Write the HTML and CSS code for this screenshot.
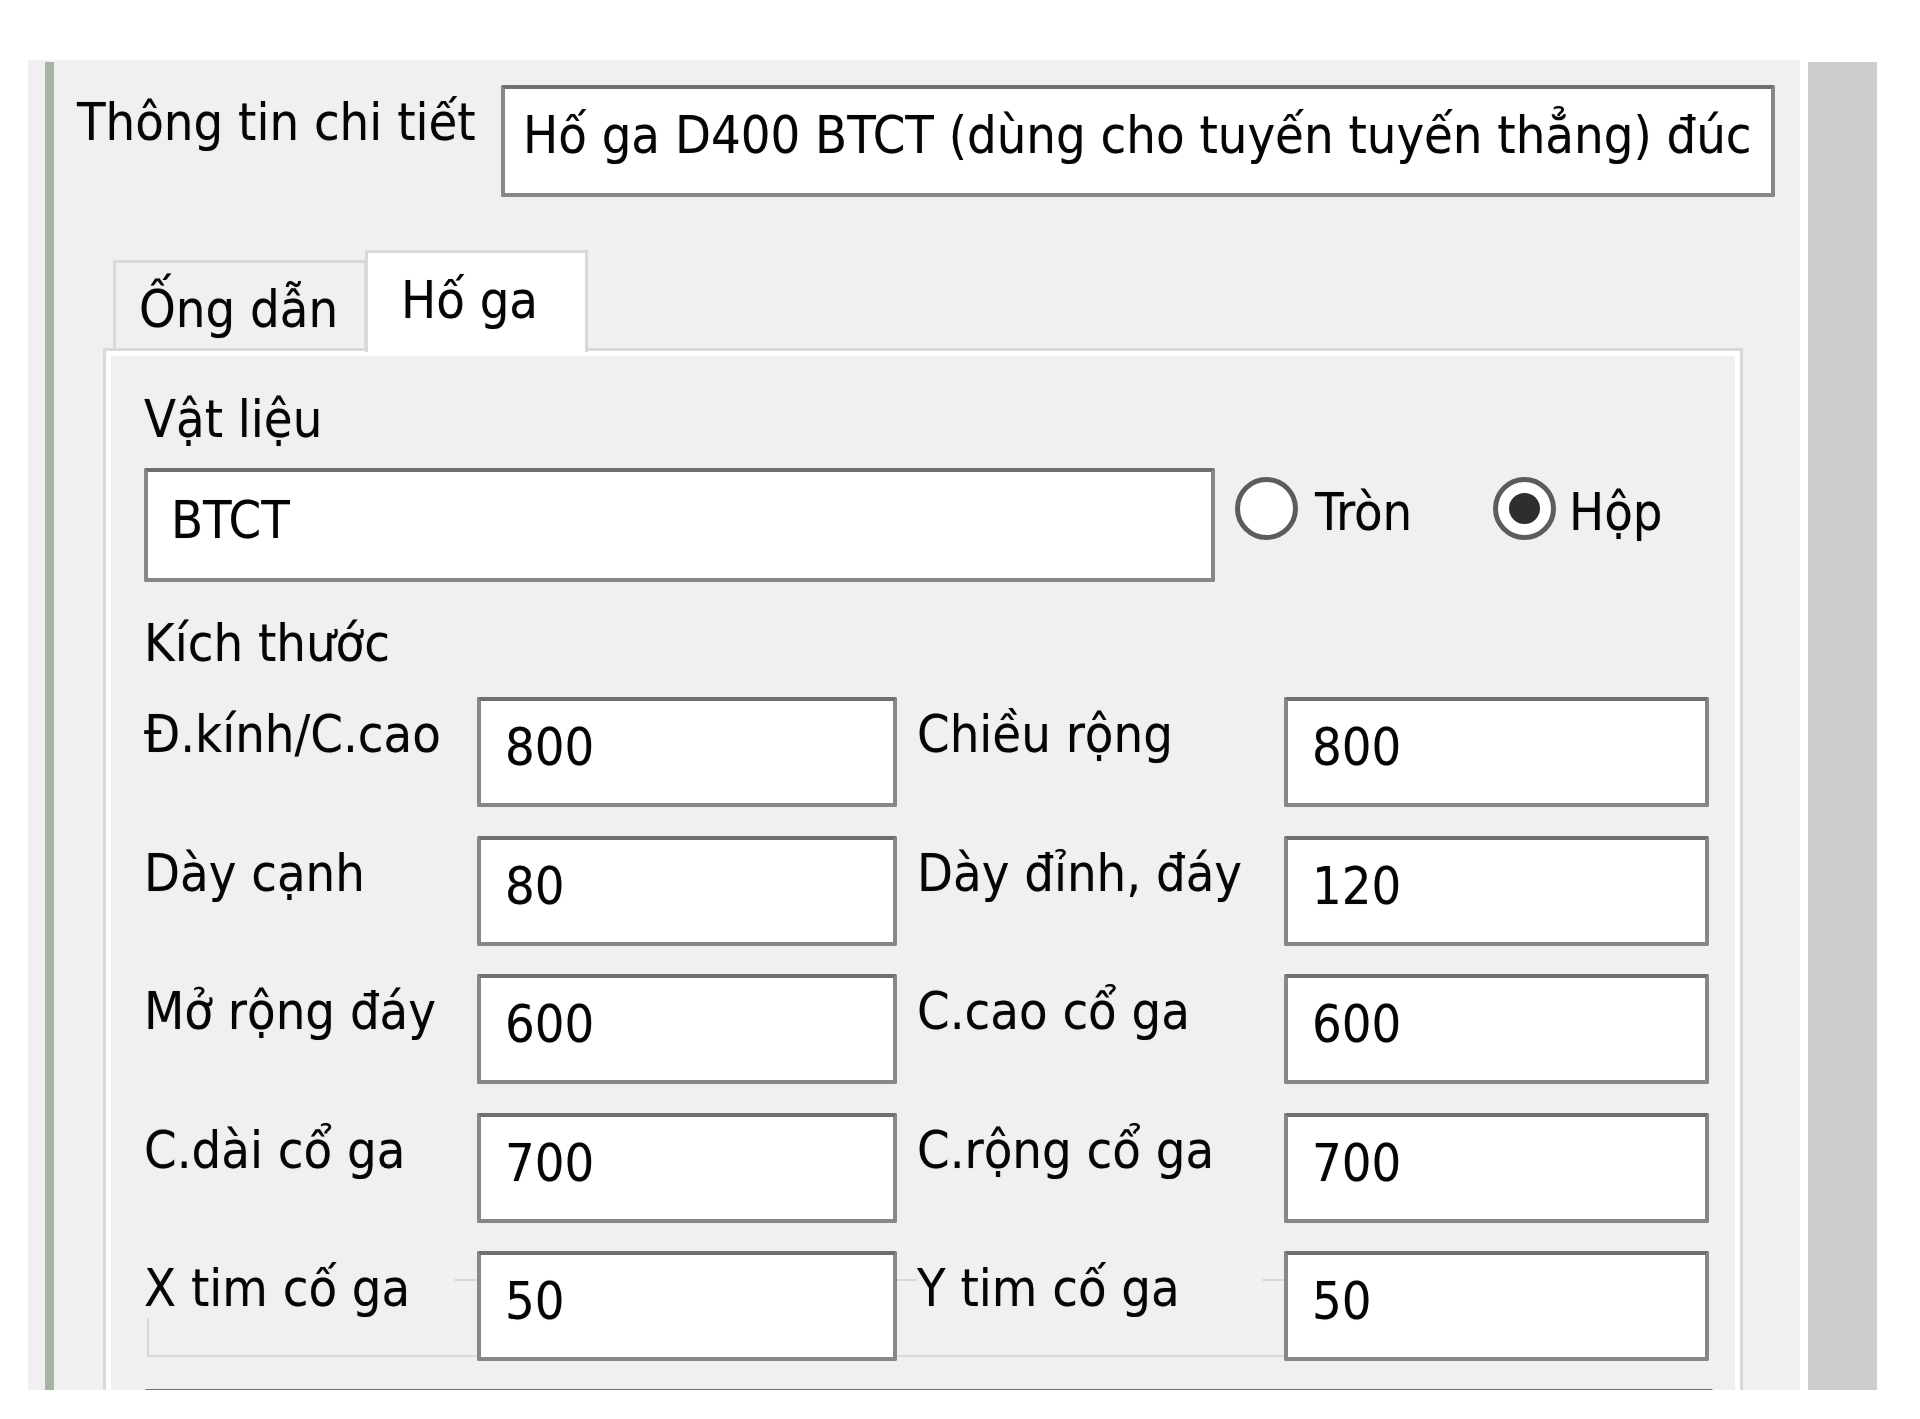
FILE: index.html
```html
<!DOCTYPE html>
<html lang="vi">
<head>
<meta charset="utf-8">
<title>Thông tin chi tiết</title>
<link rel="stylesheet" href="styles.css">
</head>
<body>
<div class="screen">
  <div class="form">
    <div class="rail"></div>
    <div class="content">
      <div class="detail-row">
        <div class="detail-label">Thông tin chi tiết</div>
        <div class="textbox detail-box">Hố ga D400 BTCT (dùng cho tuyến tuyến thẳng) đúc</div>
      </div>
      <div class="tabs">
        <div class="tabstrip">
          <div class="tab">Ống dẫn</div>
          <div class="tab tab-active">Hố ga</div>
        </div>
        <div class="tabpage">
          <div class="section-label">Vật liệu</div>
          <div class="material-row">
            <div class="textbox material-box">BTCT</div>
            <div class="radio"><span class="radio-dot"></span><span class="radio-text">Tròn</span></div>
            <div class="radio checked"><span class="radio-dot"></span><span class="radio-text">Hộp</span></div>
          </div>
          <div class="section-label size-label">Kích thước</div>
          <div class="size-grid">
            <div class="groupbox"></div>
            <div class="field-label">Đ.kính/C.cao</div>
            <div class="textbox field-box">800</div>
            <div class="field-label col2">Chiều rộng</div>
            <div class="textbox field-box">800</div>

            <div class="field-label">Dày cạnh</div>
            <div class="textbox field-box">80</div>
            <div class="field-label col2">Dày đỉnh, đáy</div>
            <div class="textbox field-box">120</div>

            <div class="field-label">Mở rộng đáy</div>
            <div class="textbox field-box">600</div>
            <div class="field-label col2">C.cao cổ ga</div>
            <div class="textbox field-box">600</div>

            <div class="field-label">C.dài cổ ga</div>
            <div class="textbox field-box">700</div>
            <div class="field-label col2">C.rộng cổ ga</div>
            <div class="textbox field-box">700</div>

            <div class="field-label">X tim cố ga</div>
            <div class="textbox field-box">50</div>
            <div class="field-label col2">Y tim cố ga</div>
            <div class="textbox field-box">50</div>
          </div>
          <div class="textbox next-box"></div>
        </div>
      </div>
    </div>
  </div>
  <div class="scrollbar"></div>
</div>
</body>
</html>
```

FILE: styles.css
```css
html, body {
  margin: 0;
  background: #ffffff;
}

body {
  font-family: "DejaVu Sans Condensed", "DejaVu Sans", sans-serif;
  font-stretch: condensed;
  font-size: 52px;
  line-height: 60px;
  color: #050505;
  text-shadow: 0 0 1px rgba(0, 0, 0, 0.35);
}

.screen {
  display: flex;
  align-items: flex-start;
  gap: 8px;
  padding: 60px 0 0 28px;
}

.form {
  flex-shrink: 0;
  display: flex;
  width: 1772px;
  height: 1330px;
  background: #f0f0f0;
  overflow: hidden;
}

.rail {
  flex-shrink: 0;
  width: 9px;
  margin: 2px 0 0 17px;
  background: #a3b69f;
}

.content {
  flex: 1;
}

.detail-row {
  display: flex;
  align-items: flex-start;
  margin-top: 25px;
}

.detail-label {
  box-sizing: border-box;
  width: 447px;
  padding-left: 23px;
  margin-top: 7px;
  white-space: nowrap;
}

.textbox {
  box-sizing: border-box;
  flex-shrink: 0;
  background: #ffffff;
  border: 4px solid #878787;
  border-top-color: #6f6f6f;
  border-radius: 2px;
  white-space: nowrap;
  overflow: hidden;
}

.detail-box {
  width: 1274px;
  height: 112px;
  padding: 16px 0 0 18px;
}

.tabs {
  width: 1640px;
  margin: 53px 0 0 49px;
}

.tabstrip {
  display: flex;
  align-items: flex-end;
  height: 98px;
  padding-left: 10px;
}

.tab {
  box-sizing: border-box;
  width: 254px;
  height: 88px;
  padding: 16px 0 0 23px;
  border: 3px solid #d9d9d9;
  border-bottom: 0;
  background: #f0f0f0;
  white-space: nowrap;
}

.tab-active {
  position: relative;
  z-index: 2;
  width: 223px;
  height: 102px;
  margin: 0 0 -4px -2px;
  padding: 17px 0 0 33px;
  background: #ffffff;
}

.tabpage {
  box-sizing: border-box;
  height: 1100px;
  padding: 38px 0 0 38px;
  border: 3px solid #d9d9d9;
  box-shadow: inset 0 0 0 5px #ffffff;
}

.section-label {
  white-space: nowrap;
}

.material-row {
  display: flex;
  align-items: flex-start;
  margin-top: 19px;
}

.material-box {
  width: 1071px;
  height: 114px;
  padding: 18px 0 0 23px;
}

.radio {
  display: flex;
  align-items: flex-start;
  flex-shrink: 0;
  width: 258px;
  margin: 9px 0 0 20px;
}

.radio + .radio {
  width: auto;
  margin-left: 0;
}

.radio-dot {
  box-sizing: border-box;
  flex-shrink: 0;
  display: flex;
  align-items: center;
  justify-content: center;
  width: 63px;
  height: 63px;
  border: 5px solid #5c5c5c;
  border-radius: 50%;
  background: #ffffff;
}

.checked .radio-dot::after {
  content: "";
  width: 31px;
  height: 31px;
  border-radius: 50%;
  background: #2e2e2e;
}

.radio-text {
  margin: 5px 0 0 17px;
  white-space: nowrap;
}

.radio.checked .radio-text {
  margin-left: 13px;
}

.size-label {
  margin-top: 31px;
}

.size-grid {
  position: relative;
  display: grid;
  grid-template-columns: 333px 420px 387px 425px;
  row-gap: 28.5px;
  margin-top: 24px;
}

.groupbox {
  position: absolute;
  z-index: 0;
  top: 582px;
  left: 3px;
  width: 1560px;
  height: 78px;
  box-sizing: border-box;
  border: 2px solid #d8d8d8;
}

.field-label {
  position: relative;
  z-index: 1;
  align-self: start;
  width: 310px;
  margin-top: 7px;
  background: #f0f0f0;
  white-space: nowrap;
}

.field-label.col2 {
  width: 345px;
  margin-left: 20px;
}

.field-box {
  position: relative;
  z-index: 1;
  height: 110px;
  padding: 16px 0 0 24px;
}

.next-box {
  width: 1568px;
  height: 60px;
  margin: 28px 0 0 1px;
}

.scrollbar {
  flex-shrink: 0;
  width: 69px;
  height: 1328px;
  margin-top: 2px;
  background: #cdcdcd;
}
```
